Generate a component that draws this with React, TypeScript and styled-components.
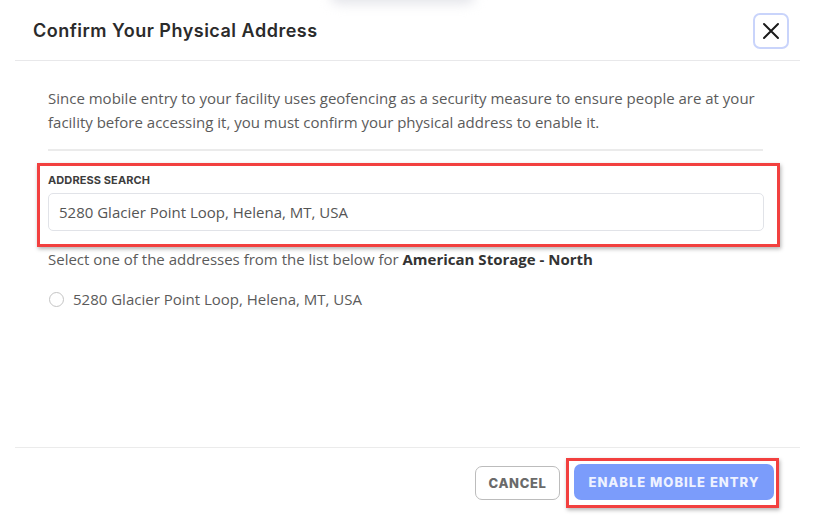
import styled, { createGlobalStyle } from "styled-components";
import { useState } from "react";

const GlobalStyle = createGlobalStyle`
    html, body {
        margin: 0;
        padding: 0;
        background: #ffffff;
    }
    * {
        box-sizing: border-box;
    }
`;

const ADDRESS = "5280 Glacier Point Loop, Helena, MT, USA";

export default function App() {
    const [query, setQuery] = useState(ADDRESS);
    const [picked, setPicked] = useState(false);

    return (
        <Page>
            <GlobalStyle />
            <TopShadow />
            <Modal>
                <Header>
                    <Title>Confirm Your Physical Address</Title>
                    <CloseBtn aria-label="close">
                        <svg width="18" height="18" viewBox="0 0 18 18">
                            <path d="M2 2 L16 16 M16 2 L2 16" stroke="#1a1a1a" strokeWidth="2" strokeLinecap="round" />
                        </svg>
                    </CloseBtn>
                </Header>

                <Body>
                    <Intro>
                        Since mobile entry to your facility uses geofencing as a security measure to ensure people are at your
                        facility before accessing it, you must confirm your physical address to enable it.
                    </Intro>
                    <Divider />

                    <SearchHighlight>
                        <FieldLabel>Address Search</FieldLabel>
                        <SearchInput value={query} onChange={(e) => setQuery(e.target.value)} />
                    </SearchHighlight>

                    <Hint>
                        Select one of the addresses from the list below for <b>American Storage - North</b>
                    </Hint>

                    <RadioRow onClick={() => setPicked(!picked)}>
                        <RadioDot $checked={picked} />
                        <span>{ADDRESS}</span>
                    </RadioRow>
                </Body>

                <Footer>
                    <CancelBtn>Cancel</CancelBtn>
                    <ButtonHighlight>
                        <EnableBtn>Enable Mobile Entry</EnableBtn>
                    </ButtonHighlight>
                </Footer>
            </Modal>
        </Page>
    );
}

const Page = styled.div`
    position: relative;
    width: 815px;
    height: 518px;
    overflow: hidden;
    background: #ffffff;
    font-family: "Open Sans", "Noto Sans", sans-serif;
`;

// blurred shadow of something sitting above the modal
const TopShadow = styled.div`
    position: absolute;
    left: 330px;
    top: -14px;
    width: 145px;
    height: 18px;
    border-radius: 12px;
    background: #e4e5ea;
    filter: blur(6px);
`;

const Modal = styled.div`
    display: flex;
    flex-direction: column;
    height: 100%;
`;

const Header = styled.div`
    display: flex;
    align-items: center;
    justify-content: space-between;
    height: 61px;
    margin: 0 15px;
    padding: 0 11px 0 18px;
    border-bottom: 1px solid #e8e8ea;
`;

const Title = styled.h2`
    margin: 0;
    font-family: "Inter", "Lato", sans-serif;
    font-size: 18px;
    font-weight: 600;
    color: #2b2b2b;
    letter-spacing: 0.5px;
`;

const CloseBtn = styled.button`
    display: flex;
    align-items: center;
    justify-content: center;
    width: 36px;
    height: 36px;
    margin-top: 1px;
    padding: 0;
    background: #ffffff;
    border: 2px solid #c9d4fb;
    border-radius: 7px;
    cursor: pointer;
`;

const Body = styled.div`
    flex: 1;
    display: flex;
    flex-direction: column;
    padding: 25px 52px 0 48px;
`;

const Intro = styled.p`
    margin: 0;
    font-size: 15px;
    line-height: 24px;
    color: #5b5b5b;
`;

const Divider = styled.div`
    height: 2px;
    margin-top: 15px;
    background: #ebebeb;
`;

const SearchHighlight = styled.div`
    display: flex;
    flex-direction: column;
    margin: 12px -17px 0 -11px;
    padding: 7px 13px 13px 8px;
    border: 3px solid #f2403f;
    box-shadow: 1px 2px 4px rgba(0, 0, 0, 0.3);
`;

const FieldLabel = styled.label`
    font-family: "Inter", "Lato", sans-serif;
    font-size: 11px;
    font-weight: 700;
    text-transform: uppercase;
    color: #3d3d3d;
    letter-spacing: 0.1px;
`;

const SearchInput = styled.input`
    height: 38px;
    margin-top: 6px;
    padding: 0 10px;
    border: 1px solid #e1e3e8;
    border-radius: 5px;
    font-family: "Open Sans", "Noto Sans", sans-serif;
    font-size: 15px;
    color: #555555;
    outline: none;
`;

const Hint = styled.p`
    margin: 0;
    font-size: 15px;
    line-height: 24px;
    color: #5b5b5b;

    b {
        font-weight: 700;
        color: #333333;
    }
`;

const RadioRow = styled.label`
    display: flex;
    align-items: center;
    gap: 9px;
    margin-top: 18px;
    padding-left: 1px;
    font-size: 15px;
    color: #5b5b5b;
    cursor: pointer;
`;

const RadioDot = styled.span<{ $checked: boolean }>`
    width: 15px;
    height: 15px;
    border-radius: 50%;
    border: 1px solid #c4c4c4;
    background: ${(p) => (p.$checked ? "radial-gradient(#7c9cfb 40%, #fff 45%)" : "#fff")};
`;

const Footer = styled.div`
    display: flex;
    align-items: center;
    justify-content: flex-end;
    gap: 6px;
    height: 71px;
    margin: 0 15px;
    padding-right: 21px;
    border-top: 1px solid #ebebeb;
`;

const CancelBtn = styled.button`
    width: 85px;
    height: 34px;
    background: #ffffff;
    border: 1.5px solid #bcbcbc;
    border-radius: 7px;
    font-family: "Inter", "Lato", sans-serif;
    font-size: 13px;
    font-weight: 800;
    text-transform: uppercase;
    color: #6a6a6a;
    letter-spacing: 0.6px;
    cursor: pointer;
`;

const ButtonHighlight = styled.div`
    display: flex;
    padding: 3px 2px 5px 5px;
    border: 3px solid #f2403f;
    box-shadow: 1px 2px 4px rgba(0, 0, 0, 0.3);
`;

const EnableBtn = styled.button`
    width: 200px;
    height: 36px;
    background: #7b9cfb;
    border: none;
    border-radius: 7px;
    font-family: "Inter", "Lato", sans-serif;
    font-size: 13px;
    font-weight: 800;
    text-transform: uppercase;
    color: #eef2ff;
    letter-spacing: 1px;
    cursor: pointer;
`;
